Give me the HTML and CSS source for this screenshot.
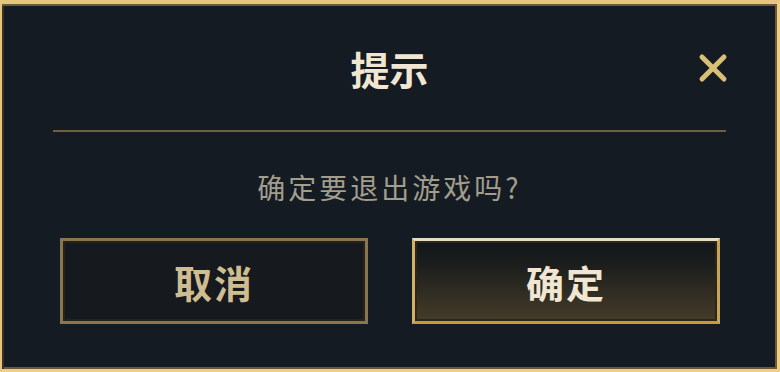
FILE: index.html
```html
<!DOCTYPE html>
<html lang="zh-CN">
<head>
    <meta charset="UTF-8">
    <meta name="viewport" content="width=device-width, initial-scale=1.0">
    <title>提示</title>
    <link rel="stylesheet" href="styles.css">
</head>
<body>
    <div class="dialog">
        <div class="dialog-header">
            <h1>提示</h1>
            <button class="close-btn" aria-label="关闭">
                <svg width="30" height="30" viewBox="0 0 30 30">
                    <path d="M4 4 L26 26 M26 4 L4 26" stroke="#d8bf75" stroke-width="5" stroke-linecap="round" fill="none"/>
                </svg>
            </button>
        </div>
        <div class="divider"></div>
        <p class="message">确定要退出游戏吗?</p>
        <div class="actions">
            <button class="btn btn-cancel">取消</button>
            <button class="btn btn-ok">确定</button>
        </div>
    </div>
</body>
</html>
```

FILE: styles.css
```css
html, body {
    margin: 0;
    padding: 0;
    height: 100%;
    background-color: #141b22;
    overflow: hidden;
    font-family: 'Noto Sans CJK SC', 'Noto Sans', sans-serif;
}

.dialog {
    box-sizing: border-box;
    width: 780px;
    height: 372px;
    background-color: #141b22;
    border-top: 4px solid #e6c57c;
    border-left: 2px solid #e6c57c;
    border-right: 3px solid #f0cf82;
    border-bottom: 3px solid #f0cf82;
    box-shadow: inset 0 2px 0 #6b5a3a, inset 2px 0 0 #3a3325, inset -2px 0 0 #6b5a3a, inset 0 -2px 0 #6b5a3a;
    display: flex;
    flex-direction: column;
}

.dialog-header {
    position: relative;
    padding-top: 40px;
}

h1 {
    margin: 0;
    text-align: center;
    color: #f0e6d2;
    font-size: 39px;
    font-weight: 700;
    line-height: 48px;
}

.close-btn {
    position: absolute;
    right: 49px;
    top: 49px;
    padding: 0;
    border: none;
    background: none;
    width: 30px;
    height: 30px;
    cursor: pointer;
}

.close-btn svg {
    display: block;
}

.divider {
    height: 2px;
    margin: 38px 51px 0;
    background-color: #6e5e42;
}

.message {
    margin: 35px 0 0;
    text-align: center;
    color: #a39d8d;
    font-size: 28px;
    font-weight: 400;
    line-height: 40px;
    letter-spacing: 3px;
}

.actions {
    display: flex;
    gap: 44px;
    padding: 0 57px 0 58px;
    margin-top: 31px;
}

.btn {
    flex: 1;
    height: 86px;
    box-sizing: border-box;
    font-family: inherit;
    font-size: 38px;
    font-weight: 700;
    letter-spacing: 2px;
    cursor: pointer;
}

.btn-cancel {
    color: #cdbd91;
    background-color: #16191d;
    border: 3px solid #8a7550;
    box-shadow: inset 0 0 0 2px #262318;
}

.btn-ok {
    color: #f0e6d2;
    background: linear-gradient(to bottom, #11161b 0%, #1c1e1d 30%, #453c29 100%);
    border: 3px solid;
    border-color: #e6dcc4 #c8a45a #c8993c #d3b06a;
    box-shadow: inset 0 0 0 2px #2c2719;
}
```
